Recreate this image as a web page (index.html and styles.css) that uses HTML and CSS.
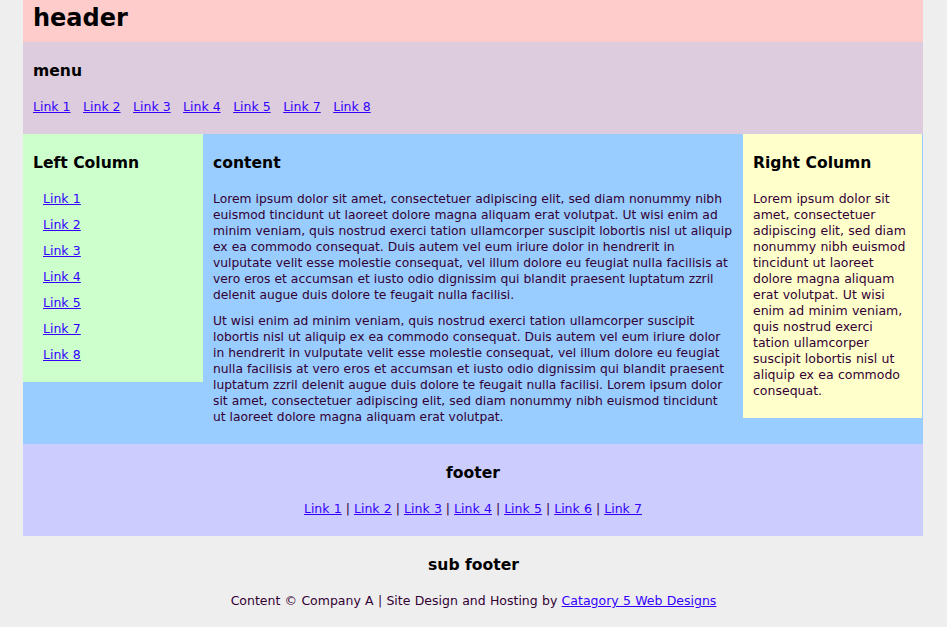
FILE: index.html
```html
<!DOCTYPE html>
<html>
<head>
<meta charset="utf-8">
<title>Layout</title>
<link rel="stylesheet" href="styles.css">
</head>
<body>
<div class="container">
  <div class="header"><h1>header</h1></div>
  <div class="menu">
    <h3>menu</h3>
    <p class="menu-links"><a href="#">Link 1</a><a href="#">Link 2</a><a href="#">Link 3</a><a href="#">Link 4</a><a href="#">Link 5</a><a href="#">Link 7</a><a href="#">Link 8</a></p>
  </div>
  <div class="columns">
    <div class="left">
      <h3>Left Column</h3>
      <ul class="side-links">
        <li><a href="#">Link 1</a></li>
        <li><a href="#">Link 2</a></li>
        <li><a href="#">Link 3</a></li>
        <li><a href="#">Link 4</a></li>
        <li><a href="#">Link 5</a></li>
        <li><a href="#">Link 7</a></li>
        <li><a href="#">Link 8</a></li>
      </ul>
    </div>
    <div class="content">
      <h3>content</h3>
      <p>Lorem ipsum dolor sit amet, consectetuer adipiscing elit, sed diam nonummy nibh euismod tincidunt ut laoreet dolore magna aliquam erat volutpat. Ut wisi enim ad minim veniam, quis nostrud exerci tation ullamcorper suscipit lobortis nisl ut aliquip ex ea commodo consequat. Duis autem vel eum iriure dolor in hendrerit in vulputate velit esse molestie consequat, vel illum dolore eu feugiat nulla facilisis at vero eros et accumsan et iusto odio dignissim qui blandit praesent luptatum zzril delenit augue duis dolore te feugait nulla facilisi.</p>
      <p>Ut wisi enim ad minim veniam, quis nostrud exerci tation ullamcorper suscipit lobortis nisl ut aliquip ex ea commodo consequat. Duis autem vel eum iriure dolor in hendrerit in vulputate velit esse molestie consequat, vel illum dolore eu feugiat nulla facilisis at vero eros et accumsan et iusto odio dignissim qui blandit praesent luptatum zzril delenit augue duis dolore te feugait nulla facilisi. Lorem ipsum dolor sit amet, consectetuer adipiscing elit, sed diam nonummy nibh euismod tincidunt ut laoreet dolore magna aliquam erat volutpat.</p>
    </div>
    <div class="right">
      <h3>Right Column</h3>
      <p>Lorem ipsum dolor sit amet, consectetuer adipiscing elit, sed diam nonummy nibh euismod tincidunt ut laoreet dolore magna aliquam erat volutpat. Ut wisi enim ad minim veniam, quis nostrud exerci tation ullamcorper suscipit lobortis nisl ut aliquip ex ea commodo consequat.</p>
    </div>
  </div>
  <div class="footer">
    <h3>footer</h3>
    <p><a href="#">Link 1</a><span class="sep">|</span><a href="#">Link 2</a><span class="sep">|</span><a href="#">Link 3</a><span class="sep">|</span><a href="#">Link 4</a><span class="sep">|</span><a href="#">Link 5</a><span class="sep">|</span><a href="#">Link 6</a><span class="sep">|</span><a href="#">Link 7</a></p>
  </div>
</div>
<div class="subfooter">
  <h3>sub footer</h3>
  <p>Content © Company A | Site Design and Hosting by <a href="#">Catagory 5 Web Designs</a></p>
</div>
</body>
</html>
```
FILE: styles.css
```css
body {
  margin: 0;
  background: #eeeeee;
  font-family: "DejaVu Sans", Verdana, sans-serif;
  font-size: 12.5px;
  line-height: 16px;
  word-spacing: 0.3px;
  color: #330033;
}

a {
  color: #3300ff;
  text-decoration: underline;
}

h1, h3 {
  color: #000000;
  font-weight: bold;
  word-spacing: 0;
}

h3 {
  font-size: 15.6px;
  line-height: 20px;
  margin: 8px 0 18px;
}

p {
  margin: 0 0 10px;
}

.container {
  width: 900px;
  margin-left: calc(50% - 450.5px);
}

.header {
  background: #ffcccc;
  padding: 0 10px 6px;
}

.header h1 {
  margin: 0;
  font-size: 24px;
  line-height: 36px;
}

.menu {
  background: #ddccdd;
  padding: 11px 10px 9px;
}

.menu-links {
  display: flex;
  gap: 12.5px;
  word-spacing: 0;
}

.columns {
  display: flex;
  align-items: flex-start;
  background: #99ccff;
}

.left {
  width: 160px;
  flex: none;
  background: #ccffcc;
  padding: 11px 10px 9px;
}

.side-links {
  list-style: none;
  margin: 0;
  padding: 0 0 0 10px;
}

.side-links li {
  margin-bottom: 10px;
}

.content {
  width: 520px;
  flex: none;
  padding: 11px 10px 9px;
}

.content p {
  font-size: 12.3px;
  word-spacing: 0.1px;
}

.right {
  width: 159px;
  flex: none;
  background: #ffffcc;
  padding: 11px 10px 9px;
}

.right p {
  width: 160px;
}

.footer {
  background: #ccccff;
  padding: 11px 10px 9px;
  text-align: center;
}

.sep {
  margin: 0 4px;
}

.subfooter {
  padding: 11px 10px 9px;
  text-align: center;
}
```
